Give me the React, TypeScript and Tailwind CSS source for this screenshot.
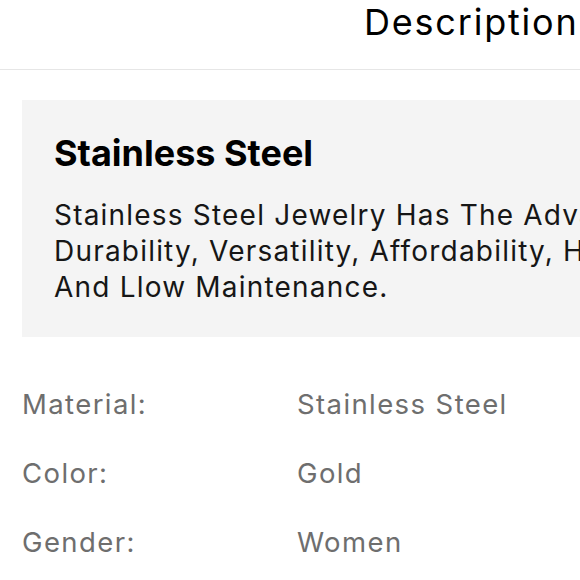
const SPECS = [
  { label: 'Material:', value: 'Stainless Steel' },
  { label: 'Color:', value: 'Gold' },
  { label: 'Gender:', value: 'Women' },
]

export default function App() {
  return (
    <div className="w-[580px] h-[580px] overflow-hidden bg-white font-['Inter',sans-serif]">
      <header className="h-[70px] border-b border-[#e6e6e6] pl-[364px] pt-[2px]">
        <h1 className="whitespace-nowrap text-[36px] leading-[40px] tracking-[1.8px] text-black">Description</h1>
      </header>

      <div className="pl-[22px] pt-[30px]">
        <section className="w-[820px] bg-[#f4f4f4] pb-[32px] pl-[32px] pt-[31px]">
          <h2 className="text-[36px] font-bold leading-[44px] text-black">Stainless Steel</h2>
          <p className="mt-[22px] whitespace-nowrap text-[28px] leading-[36px] tracking-[1.2px] text-[#161616]">
            Stainless Steel Jewelry Has The Advantages Of
            <br />
            Durability, Versatility, Affordability, Hypoallergenic Properties,
            <br />
            And Llow Maintenance.
          </p>
        </section>
      </div>

      <dl className="mt-[49px] flex flex-col gap-[33px] px-[22px]">
        {SPECS.map((s) => (
          <div key={s.label} className="flex text-[27.5px] leading-[36px] tracking-[1.4px] text-[#6e6e6e]">
            <dt className="w-[275px] shrink-0">{s.label}</dt>
            <dd className="whitespace-nowrap">{s.value}</dd>
          </div>
        ))}
      </dl>
    </div>
  )
}
